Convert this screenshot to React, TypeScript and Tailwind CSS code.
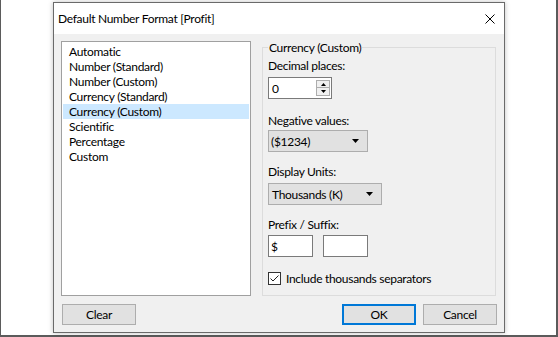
import React from "react";

const items = [
  "Automatic",
  "Number (Standard)",
  "Number (Custom)",
  "Currency (Standard)",
  "Currency (Custom)",
  "Scientific",
  "Percentage",
  "Custom",
];

const Arrow = () => (
  <svg width="7" height="4" viewBox="0 0 7 4">
    <path d="M0 0h7L3.5 4z" fill="#000" />
  </svg>
);

const App = () => {
  return (
    <div className="w-[558px] h-[337px] bg-white border-l border-r-2 border-b-2 border-[#5b5b5b] pl-[52px] pt-[2px] font-['Lato',sans-serif] text-[12px] tracking-[-0.3px] text-black leading-[15px]">
      <div className="w-[452px] h-[331px] border border-[#6a6a6a] bg-[#f0f0f0] flex flex-col shadow-[0_0_5px_rgba(0,0,0,0.25)]">
        {/* title bar */}
        <div className="h-[31px] bg-white flex items-center justify-between pl-[4px] pr-[9px] shrink-0">
          <span>Default Number Format [Profit]</span>
          <svg width="10" height="10" viewBox="0 0 10 10">
            <path d="M0.5 0.5L9.5 9.5M9.5 0.5L0.5 9.5" stroke="#000" strokeWidth="1" />
          </svg>
        </div>

        <div className="flex flex-col px-[7px] pt-[7px]">
          <div className="flex items-start">
            {/* list box */}
            <div className="w-[190px] h-[255px] bg-white border border-[#a0a0a0] p-[1px] pt-[1.5px]">
              {items.map((it) => (
                <div
                  key={it}
                  className={
                    "h-[15px] pl-[6px] whitespace-nowrap " +
                    (it === "Currency (Custom)" ? "bg-[#cce8ff]" : "")
                  }
                >
                  {it}
                </div>
              ))}
            </div>

            {/* group box */}
            <fieldset className="ml-[11px] mt-[-1px] w-[234px] border border-[#dcdcdc] pl-[5px] pr-[5px] pb-[9px]">
              <legend className="px-[1px] leading-[15px]">Currency (Custom)</legend>
              <div className="mt-[3px] h-[15px]">Decimal places:</div>
              <div className="mt-[4px] w-[64px] h-[22px] bg-white border border-[#7a7a7a] flex items-center justify-between pl-[3px] pr-[1px]">
                <span>0</span>
                <div className="flex flex-col">
                  <div className="w-[14px] h-[8px] border border-[#adadad] bg-[#f0f0f0] flex items-center justify-center">
                    <svg width="5" height="3" viewBox="0 0 5 3">
                      <path d="M0 3h5L2.5 0z" fill="#000" />
                    </svg>
                  </div>
                  <div className="w-[14px] h-[8px] border border-t-0 border-[#adadad] bg-[#f0f0f0] flex items-center justify-center">
                    <svg width="5" height="3" viewBox="0 0 5 3">
                      <path d="M0 0h5L2.5 3z" fill="#000" />
                    </svg>
                  </div>
                </div>
              </div>

              <div className="mt-[14px] h-[15px]">Negative values:</div>
              <div className="mt-[2px] w-[100px] h-[22px] bg-[#e1e1e1] border border-[#adadad] flex items-center justify-between pl-[2px] pr-[8px]">
                <span>($1234)</span>
                <Arrow />
              </div>

              <div className="mt-[12px] h-[15px]">Display Units:</div>
              <div className="mt-[4px] w-[114px] h-[22px] bg-[#e1e1e1] border border-[#adadad] flex items-center justify-between pl-[3px] pr-[8px]">
                <span>Thousands (K)</span>
                <Arrow />
              </div>

              <div className="mt-[12px] h-[15px]">Prefix / Suffix:</div>
              <div className="mt-[3px] flex gap-[10px]">
                <div className="w-[45px] h-[22px] bg-white border border-[#7a7a7a] flex items-center pl-[2px]">$</div>
                <div className="w-[45px] h-[22px] bg-white border border-[#7a7a7a]" />
              </div>

              <div className="mt-[14px] flex items-center h-[15px]">
                <div className="w-[13px] h-[13px] border border-[#333] bg-white flex items-center justify-center">
                  <svg width="11" height="11" viewBox="0 0 11 11">
                    <path d="M1.5 5.5L4 8L9.5 2.5" stroke="#222" strokeWidth="1" fill="none" />
                  </svg>
                </div>
                <span className="ml-[5px]">Include thousands separators</span>
              </div>
            </fieldset>
          </div>

          {/* buttons */}
          <div className="mt-[8px] flex items-center">
            <button className="ml-[1px] w-[74px] h-[21px] bg-[#e1e1e1] border border-[#adadad] text-center">
              Clear
            </button>
            <button className="ml-[206px] w-[74px] h-[21px] bg-[#e1e1e1] border-2 border-[#0078d7] text-center">
              OK
            </button>
            <button className="ml-[7px] w-[74px] h-[21px] bg-[#e1e1e1] border border-[#adadad] text-center">
              Cancel
            </button>
          </div>
        </div>
      </div>
    </div>
  );
};

export default App;
